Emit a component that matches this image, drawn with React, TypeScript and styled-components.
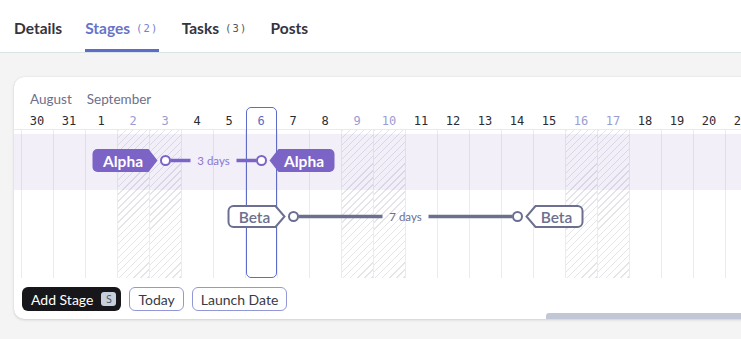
import React from 'react';
import styled, { createGlobalStyle } from 'styled-components';

const SANS = `Lato, "Noto Sans", sans-serif`;
const MONO = `"DejaVu Sans Mono", "Liberation Mono", monospace`;

const GlobalStyle = createGlobalStyle`
  html, body { margin: 0; padding: 0; }
  body {
    background: #f4f4f5;
    font-family: ${SANS};
    overflow: hidden;
    width: 741px;
    height: 339px;
  }
  * { box-sizing: border-box; }
`;

/* ---------- Tabs ---------- */
const TabBar = styled.nav`
  display: flex;
  gap: 23px;
  padding-left: 14px;
  height: 53px;
  background: #fff;
  border-bottom: 1px solid #d9e4e4;
`;

const Tab = styled.div<{ $active?: boolean }>`
  display: flex;
  align-items: center;
  gap: 6px;
  height: 52px;
  padding-top: 7px;
  font-size: 15.5px;
  font-weight: 700;
  color: ${(p) => (p.$active ? '#6773c9' : '#34343f')};
  border-bottom: 3px solid ${(p) => (p.$active ? '#5f6cc7' : 'transparent')};
`;

const Count = styled.span<{ $active?: boolean }>`
  font-family: ${MONO};
  font-size: 10.5px;
  font-weight: 400;
  letter-spacing: 1.2px;
  color: ${(p) => (p.$active ? '#7480cf' : '#555560')};
`;

/* ---------- Card ---------- */
const Card = styled.section`
  margin: 24px -60px 0 14px;
  background: #fff;
  border-radius: 10px;
  box-shadow: 0 1px 3px rgba(0, 0, 0, 0.14), 0 0 1px rgba(0, 0, 0, 0.12);
  padding-top: 15px;
  overflow: hidden;
`;

const MonthRow = styled.div`
  display: flex;
  gap: 15px;
  padding-left: 16px;
  height: 15px;
  line-height: 15px;
  font-size: 13.5px;
  color: #6e6f8a;
`;

const TimelineGrid = styled.div`
  display: grid;
  grid-template-columns: 7px repeat(23, 32px);
  grid-template-rows: 23px 148px;
`;

type DayKind = 'normal' | 'weekend' | 'today';

const dayColor: Record<DayKind, string> = {
  normal: '#2b2b33',
  weekend: '#9a9dd2',
  today: '#5b6bc6',
};

const DayCell = styled.div<{ $kind: DayKind }>`
  grid-row: 1;
  display: flex;
  align-items: center;
  justify-content: center;
  padding-top: 5px;
  border-bottom: 1px solid #eaeaee;
  font-family: ${MONO};
  font-size: 12px;
  color: ${(p) => dayColor[p.$kind]};
  white-space: nowrap;
  overflow: hidden;
`;

const ColumnCell = styled.div<{ $weekend?: boolean; $first?: boolean }>`
  grid-row: 2;
  border-left: 1px solid ${(p) => (p.$first ? 'transparent' : '#ececef')};
  background: ${(p) =>
    p.$weekend
      ? 'repeating-linear-gradient(135deg, #e4e4e9 0 1px, transparent 1px 5px)'
      : 'transparent'};
`;

const TodayFrame = styled.div<{ $col: number }>`
  grid-column: ${(p) => p.$col};
  grid-row: 1 / 3;
  margin-left: 1px;
  border: 1px solid #5d6cc7;
  border-radius: 5px;
  pointer-events: none;
`;

const RowsLayer = styled.div`
  grid-column: 1 / -1;
  grid-row: 2;
  display: flex;
  flex-direction: column;
  padding-top: 4px;
  position: relative;
  z-index: 2;
`;

const StageRow = styled.div<{ $highlight?: boolean }>`
  height: 56px;
  background: ${(p) => (p.$highlight ? 'rgba(124, 99, 196, 0.1)' : 'transparent')};
  svg { display: block; overflow: visible; }
`;

/* ---------- Footer ---------- */
const ButtonRow = styled.div`
  display: flex;
  gap: 8px;
  padding: 9px 0 0 8px;
`;

const PrimaryButton = styled.button`
  display: flex;
  align-items: center;
  gap: 8px;
  height: 24px;
  padding: 0 5px 0 9px;
  border: none;
  border-radius: 6px;
  background: #17171b;
  color: #fff;
  font-family: ${SANS};
  font-size: 14px;
`;

const Kbd = styled.span`
  display: flex;
  align-items: center;
  justify-content: center;
  width: 15px;
  height: 14px;
  border-radius: 3px;
  background: #c6d0dc;
  color: #525862;
  font-family: ${MONO};
  font-size: 10px;
`;

const OutlineButton = styled.button`
  height: 24px;
  padding: 0 8px;
  border: 1px solid #9298d6;
  border-radius: 6px;
  background: #fff;
  color: #3a3a44;
  font-family: ${SANS};
  font-size: 14px;
`;

const ScrollTrack = styled.div`
  height: 6px;
  margin-top: 2px;
  padding-left: 532px;
`;

const ScrollThumb = styled.div`
  height: 6px;
  width: 280px;
  background: #c2c7d5;
  border-radius: 3px 0 0 0;
`;

/* ---------- Data ---------- */
type Day = { label: string; kind: DayKind };
const days: Day[] = [
  { label: '29', kind: 'normal' },
  { label: '30', kind: 'normal' },
  { label: '31', kind: 'normal' },
  ...Array.from({ length: 21 }, (_, i) => {
    const d = i + 1;
    const weekend = [2, 3, 9, 10, 16, 17].includes(d);
    return { label: String(d), kind: (d === 6 ? 'today' : weekend ? 'weekend' : 'normal') as DayKind };
  }),
];

// column 0 is the partially hidden "29"; x of column i (i>=1) = 7 + 32*(i-1)
const colCenter = (i: number) => 7 + 32 * (i - 1) + 16.5;
const dayIndex = (sepDay: number) => sepDay + 2; // Sep 1 -> index 3

type Stage = {
  name: string;
  start: number;
  end: number;
  filled: boolean;
  width: number;
};

const stages: Stage[] = [
  { name: 'Alpha', start: 3, end: 6, filled: true, width: 65 },
  { name: 'Beta', start: 7, end: 14, filled: false, width: 58 },
];

const CY = 26.5;
const H = 23;
const R = 5;
const NOTCH = 9;

function startPill(tip: number, w: number, inset: number) {
  const top = CY - H / 2 + inset;
  const bot = CY + H / 2 - inset;
  const x0 = tip - w + inset;
  const t = tip - inset;
  return `M${x0 + R} ${top} L${t - NOTCH} ${top} L${t} ${CY} L${t - NOTCH} ${bot} L${x0 + R} ${bot} A${R} ${R} 0 0 1 ${x0} ${bot - R} L${x0} ${top + R} A${R} ${R} 0 0 1 ${x0 + R} ${top} Z`;
}

function endPill(tip: number, w: number, inset: number) {
  const top = CY - H / 2 + inset;
  const bot = CY + H / 2 - inset;
  const x1 = tip + w - inset;
  const t = tip + inset;
  return `M${x1 - R} ${top} L${t + NOTCH} ${top} L${t} ${CY} L${t + NOTCH} ${bot} L${x1 - R} ${bot} A${R} ${R} 0 0 0 ${x1} ${bot - R} L${x1} ${top + R} A${R} ${R} 0 0 0 ${x1 - R} ${top} Z`;
}

function StageChart({ stage }: { stage: Stage }) {
  const c1 = colCenter(dayIndex(stage.start));
  const c2 = colCenter(dayIndex(stage.end));
  const mid = (c1 + c2) / 2;
  const color = stage.filled ? '#7c63c6' : '#6c6f8f';
  const labelColor = stage.filled ? '#8a76d0' : '#6c6f8f';
  const fill = stage.filled ? '#7c63c6' : '#ffffff';
  const textColor = stage.filled ? '#ffffff' : '#6c6f8f';
  const inset = stage.filled ? 0 : 1;
  const sw = stage.filled ? 0 : 2;
  const tip1 = c1 - 8;
  const tip2 = c2 + 8;
  const days = stage.end - stage.start;
  return (
    <svg width={743} height={56} viewBox="0 0 743 56">
      <line x1={c1 + 5} y1={CY} x2={mid - 23} y2={CY} stroke={color} strokeWidth={3.5} />
      <line x1={mid + 23} y1={CY} x2={c2 - 5} y2={CY} stroke={color} strokeWidth={3.5} />
      <text
        x={mid}
        y={CY}
        textAnchor="middle"
        dominantBaseline="central"
        fill={labelColor}
        fontFamily="Lato, sans-serif"
        fontSize={11.5}
      >
        {days} days
      </text>
      <path d={startPill(tip1, stage.width, inset)} fill={fill} stroke={color} strokeWidth={sw} />
      <text
        x={(tip1 - stage.width + tip1 - 4) / 2}
        y={CY + 0.5}
        textAnchor="middle"
        dominantBaseline="central"
        fill={textColor}
        fontFamily="Lato, sans-serif"
        fontWeight={stage.filled ? 700 : 600}
        fontSize={15.5}
      >
        {stage.name}
      </text>
      <path d={endPill(tip2, stage.width, inset)} fill={fill} stroke={color} strokeWidth={sw} />
      <text
        x={(tip2 + 4 + tip2 + stage.width) / 2}
        y={CY + 0.5}
        textAnchor="middle"
        dominantBaseline="central"
        fill={textColor}
        fontFamily="Lato, sans-serif"
        fontWeight={stage.filled ? 700 : 600}
        fontSize={15.5}
      >
        {stage.name}
      </text>
      <circle cx={c1} cy={CY} r={4.5} fill="#fff" stroke={color} strokeWidth={2} />
      <circle cx={c2} cy={CY} r={4.5} fill="#fff" stroke={color} strokeWidth={2} />
    </svg>
  );
}

export default function App() {
  return (
    <>
      <GlobalStyle />
      <TabBar>
        <Tab>Details</Tab>
        <Tab $active>
          Stages <Count $active>(2)</Count>
        </Tab>
        <Tab>
          Tasks <Count>(3)</Count>
        </Tab>
        <Tab>Posts</Tab>
      </TabBar>
      <Card>
        <MonthRow>
          <span>August</span>
          <span>September</span>
        </MonthRow>
        <TimelineGrid>
          {days.map((d, i) => (
            <DayCell key={`d${i}`} $kind={d.kind} style={{ gridColumn: i + 1 }}>
              {i === 0 ? '' : d.label}
            </DayCell>
          ))}
          {days.map((d, i) => (
            <ColumnCell
              key={`c${i}`}
              $first={i === 0}
              $weekend={d.kind === 'weekend'}
              style={{ gridColumn: i + 1 }}
            />
          ))}
          <TodayFrame $col={days.findIndex((d) => d.kind === 'today') + 1} />
          <RowsLayer>
            {stages.map((s) => (
              <StageRow key={s.name} $highlight={s.filled}>
                <StageChart stage={s} />
              </StageRow>
            ))}
          </RowsLayer>
        </TimelineGrid>
        <ButtonRow>
          <PrimaryButton>
            Add Stage <Kbd>S</Kbd>
          </PrimaryButton>
          <OutlineButton>Today</OutlineButton>
          <OutlineButton>Launch Date</OutlineButton>
        </ButtonRow>
        <ScrollTrack>
          <ScrollThumb />
        </ScrollTrack>
      </Card>
    </>
  );
}
